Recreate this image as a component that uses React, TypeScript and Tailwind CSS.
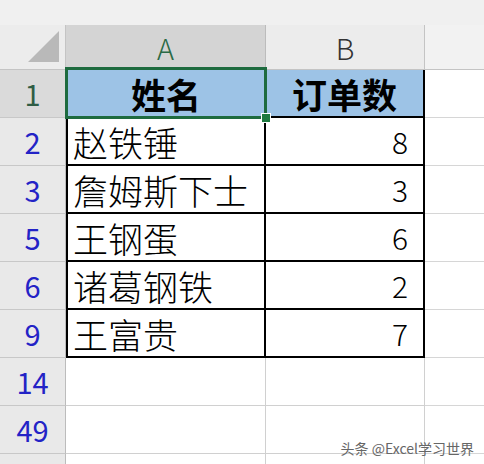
import React from "react";

const FONT = '"Noto Sans CJK SC", "Noto Sans", sans-serif';

type Row = { n: string; name: string; qty: string };
const rows: Row[] = [
  { n: "2", name: "赵铁锤", qty: "8" },
  { n: "3", name: "詹姆斯下士", qty: "3" },
  { n: "5", name: "王钢蛋", qty: "6" },
  { n: "6", name: "诸葛钢铁", qty: "2" },
  { n: "9", name: "王富贵", qty: "7" },
];

function RowHead({ label, selected }: { label: string; selected?: boolean }) {
  return (
    <div
      className={`flex h-full w-[66px] shrink-0 items-center justify-center border-r border-b border-r-[#bcbcbc] border-b-[#c8c8c8] text-[29px] leading-none ${
        selected ? "bg-[#dadada] text-[#2f5d45]" : "bg-[#e9e9e9] text-[#2323c6]"
      }`}
    >
      {label}
    </div>
  );
}

export default function App() {
  return (
    <div
      className="relative flex h-[464px] w-[484px] flex-col overflow-hidden bg-white"
      style={{ fontFamily: FONT }}
    >
      {/* top strip */}
      <div className="h-[25px] shrink-0 bg-[#f0f0f0]" />

      {/* column headers */}
      <div className="flex h-[45px] shrink-0 border-b border-[#c4c4c4] bg-[#ececec]">
        <div className="flex w-[66px] shrink-0 items-end justify-end border-r border-[#c4c4c4] pr-[6px] pb-[7px]">
          <svg width="31" height="31" viewBox="0 0 31 31">
            <polygon points="31,0 31,31 0,31" fill="#b9b9b9" />
          </svg>
        </div>
        <div className="flex w-[200px] shrink-0 items-center justify-center border-r border-[#bcbcbc] bg-[#d4d4d4] text-[29px] font-light leading-none text-[#2a6a45]">
          A
        </div>
        <div className="flex w-[159px] shrink-0 items-center justify-center border-r border-[#c4c4c4] text-[29px] font-light leading-none text-[#333333]">
          B
        </div>
        <div className="flex-1 bg-[#f2f2f2]" />
      </div>

      {/* row 1 */}
      <div className="flex h-[48px] shrink-0">
        <RowHead label="1" selected />
        <div className="relative flex w-[200px] shrink-0 items-center justify-center border-x-2 border-b-2 border-black bg-[#9dc3e6] text-[35px] font-bold leading-none text-black">
          姓名
          <div className="pointer-events-none absolute -top-[3px] -left-[3px] -right-[3px] -bottom-[3px] border-[3px] border-[#1e6b3f]" />
          <div className="absolute -right-[7px] -bottom-[7px] h-[10px] w-[10px] border border-white bg-[#1e7a40]" />
        </div>
        <div className="flex w-[159px] shrink-0 items-center justify-center border-r-2 border-b-2 border-black bg-[#9dc3e6] text-[35px] font-bold leading-none text-black">
          订单数
        </div>
        <div className="flex-1 border-b border-[#d6d6d6]" />
      </div>

      {rows.map((r) => (
        <div key={r.n} className="flex h-[48px] shrink-0">
          <RowHead label={r.n} />
          <div className="flex w-[200px] shrink-0 items-center border-x-2 border-b-2 border-black pl-[5px] text-[35px] font-light leading-none text-black">
            {r.name}
          </div>
          <div className="flex w-[159px] shrink-0 items-center justify-end border-r-2 border-b-2 border-black pr-[15px] text-[30px] font-light leading-none text-black">
            {r.qty}
          </div>
          <div className="flex-1 border-b border-[#d6d6d6]" />
        </div>
      ))}

      {["14", "49"].map((n) => (
        <div key={n} className="flex h-[48px] shrink-0">
          <RowHead label={n} />
          <div className="w-[200px] shrink-0 border-r border-b border-[#d0d0d0]" />
          <div className="w-[159px] shrink-0 border-r border-b border-[#d0d0d0]" />
          <div className="flex-1 border-b border-[#d6d6d6]" />
        </div>
      ))}

      <div className="flex flex-1">
        <div className="w-[66px] shrink-0 border-r border-[#bcbcbc] bg-[#e9e9e9]" />
        <div className="w-[200px] shrink-0 border-r border-[#d0d0d0]" />
        <div className="w-[159px] shrink-0 border-r border-[#d0d0d0]" />
        <div className="flex-1" />
      </div>

      <div className="absolute right-[10px] bottom-[9px] text-[14px] leading-none text-[#666666]">
        头条 @Excel学习世界
      </div>
    </div>
  );
}
